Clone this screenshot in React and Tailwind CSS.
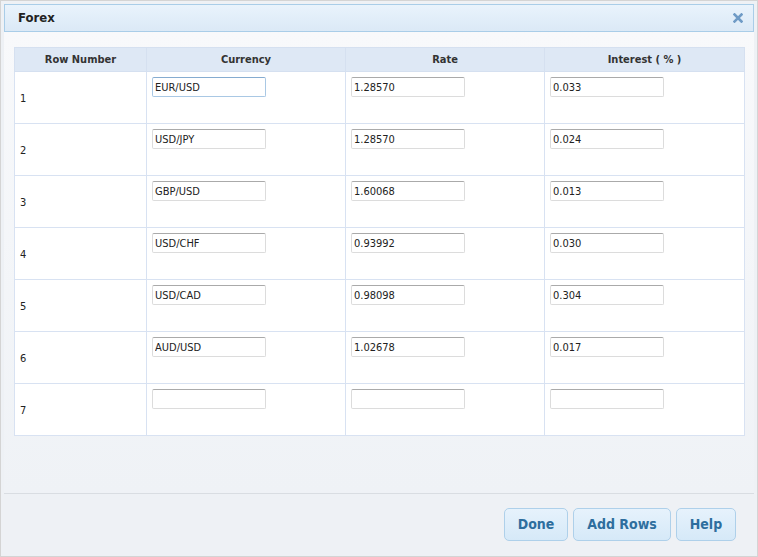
import React from 'react';

const rows = [
  { currency: 'EUR/USD', rate: '1.28570', interest: '0.033' },
  { currency: 'USD/JPY', rate: '1.28570', interest: '0.024' },
  { currency: 'GBP/USD', rate: '1.60068', interest: '0.013' },
  { currency: 'USD/CHF', rate: '0.93992', interest: '0.030' },
  { currency: 'USD/CAD', rate: '0.98098', interest: '0.304' },
  { currency: 'AUD/USD', rate: '1.02678', interest: '0.017' },
  { currency: '', rate: '', interest: '' },
];

function Field({ value, focused }) {
  return (
    <input
      defaultValue={value}
      className={`block w-[114px] h-[20px] px-[2px] bg-white text-[11px] text-[#222] outline-none rounded-[2px] border ${
        focused ? 'border-[#a9c8e4] border-t-[#86acd0]' : 'border-[#dcdcdc] border-t-[#aaaaaa]'
      }`}
    />
  );
}

function Button({ children, width }) {
  return (
    <button
      className={`${width} h-[33px] rounded-[5px] border border-[#aed0ea] bg-gradient-to-b from-[#e6f2fc] to-[#d6e9f8] text-[14px] font-bold text-[#2e6e9e]`}
    >
      {children}
    </button>
  );
}

export default function App() {
  return (
    <div
      className="w-[758px] h-[557px] border border-[#d4d4d4] bg-[#eef1f5] p-[3px] flex flex-col"
      style={{ fontFamily: '"DejaVu Sans Condensed", "DejaVu Sans", sans-serif' }}
    >
      {/* Title bar */}
      <div className="h-[28px] shrink-0 flex items-center justify-between pl-[13px] pr-[10px] border border-[#a9cde8] bg-gradient-to-b from-[#e9f3fc] to-[#dbe9f6]">
        <span className="text-[13px] font-bold text-[#222]">Forex</span>
        <svg width="10" height="10" viewBox="0 0 10 10">
          <path d="M1.5 1.5 L8.5 8.5 M8.5 1.5 L1.5 8.5" stroke="#6f9bc6" strokeWidth="2.6" strokeLinecap="square" />
        </svg>
      </div>

      {/* Content */}
      <div className="flex-1 bg-gradient-to-b from-[#f8f9fb] to-[#eff2f6] pt-[15px] pl-[10px]">
        <table className="table-fixed border-collapse w-[730px] bg-white text-[11px] text-[#222]">
          <colgroup>
            <col className="w-[132px]" />
            <col className="w-[199px]" />
            <col className="w-[199px]" />
            <col className="w-[200px]" />
          </colgroup>
          <thead>
            <tr className="h-[24px] bg-[#dee8f5]">
              {['Row Number', 'Currency', 'Rate', 'Interest ( % )'].map((h) => (
                <th key={h} className="border border-[#d5e0f0] font-bold text-[#333] text-center p-0 pt-[1px]">
                  {h}
                </th>
              ))}
            </tr>
          </thead>
          <tbody>
            {rows.map((r, i) => (
              <tr key={i} className="h-[52px]">
                <td className="border border-[#d8e2f2] pl-[5px] pt-[4px] align-middle">{i + 1}</td>
                <td className="border border-[#d8e2f2] pl-[5px] pt-[5px] align-top">
                  <Field value={r.currency} focused={i === 0} />
                </td>
                <td className="border border-[#d8e2f2] pl-[5px] pt-[5px] align-top">
                  <Field value={r.rate} />
                </td>
                <td className="border border-[#d8e2f2] pl-[5px] pt-[5px] align-top">
                  <Field value={r.interest} />
                </td>
              </tr>
            ))}
          </tbody>
        </table>
      </div>

      {/* Footer */}
      <div className="h-[60px] shrink-0 border-t border-[#d9dde2] flex items-start justify-end gap-[5px] pt-[14px] pr-[18px]">
        <Button width="w-[64px]">Done</Button>
        <Button width="w-[98px]">Add Rows</Button>
        <Button width="w-[60px]">Help</Button>
      </div>
    </div>
  );
}
